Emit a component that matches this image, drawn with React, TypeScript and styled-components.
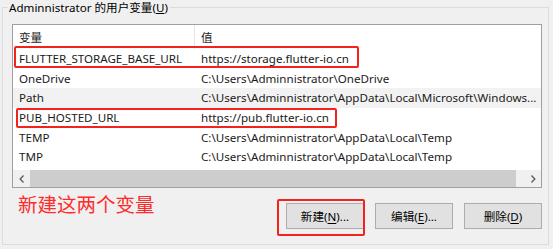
import React from 'react';
import styled, { createGlobalStyle } from 'styled-components';

const GlobalStyle = createGlobalStyle`
  html, body {
    margin: 0;
    padding: 0;
    background: #f0f0f0;
  }
  body {
    font-family: "Noto Sans", "Noto Sans CJK SC", sans-serif;
    font-size: 11.6px;
    color: #000;
  }
`;

const Page = styled.div`
  width: 553px;
  height: 249px;
  padding: 0 4px 0 2px;
  box-sizing: border-box;
  overflow: hidden;
`;

const GroupBox = styled.fieldset`
  margin: 0;
  padding: 0 6px 0 9px;
  height: 245px;
  box-sizing: border-box;
  border: 1px solid #dcdcdc;
  display: flex;
  flex-direction: column;
`;

const Legend = styled.legend`
  margin-left: -4px;
  padding: 0 2px 0 1px;
  line-height: 15px;
  color: #000;
`;

const ListBox = styled.div`
  margin-top: 9px;
  height: 164px;
  box-sizing: border-box;
  border: 1px solid #a0a0a0;
  background: #fff;
  display: flex;
  flex-direction: column;
  position: relative;
`;

const Header = styled.div`
  display: flex;
  height: 24px;
  align-items: center;
  color: #1e1e1e;
`;

const HeadCell = styled.div<{ $w?: number }>`
  width: ${p => (p.$w ? `${p.$w}px` : 'auto')};
  flex: ${p => (p.$w ? 'none' : 1)};
  height: 100%;
  box-sizing: border-box;
  padding-left: 6px;
  display: flex;
  align-items: center;
  border-right: ${p => (p.$w ? '1px solid #e5e5e5' : 'none')};
`;

const Row = styled.div<{ $hover?: boolean }>`
  display: flex;
  height: 19.6px;
  align-items: center;
  background: ${p => (p.$hover ? '#f2f2f2' : 'transparent')};
  position: relative;
  white-space: nowrap;
  color: #1a1a1a;
`;

const Cell = styled.div<{ $w?: number }>`
  width: ${p => (p.$w ? `${p.$w}px` : 'auto')};
  flex: ${p => (p.$w ? 'none' : 1)};
  padding-left: 6px;
  box-sizing: border-box;
  overflow: hidden;
`;

const Mark = styled.span<{ $x: number; $w: number; $y: number; $h: number }>`
  position: absolute;
  left: ${p => p.$x}px;
  top: ${p => p.$y}px;
  width: ${p => p.$w}px;
  height: ${p => p.$h}px;
  box-sizing: border-box;
  border: 2px solid #f2231f;
  border-radius: 2px;
  pointer-events: none;
`;

const Spacer = styled.div`
  flex: 1;
`;

const HScroll = styled.div`
  display: flex;
  height: 17px;
  background: #f0f0f0;
`;

const ScrollBtn = styled.div`
  width: 17px;
  display: flex;
  align-items: center;
  justify-content: center;
`;

const Thumb = styled.div`
  flex: 1;
  background: #cdcdcd;
  margin-right: 8px;
`;

const Footer = styled.div`
  flex: 1;
  display: flex;
  align-items: flex-start;
  justify-content: space-between;
  padding-top: 4px;
`;

const Note = styled.div`
  font-family: "Noto Sans CJK SC", sans-serif;
  font-size: 19.5px;
  line-height: 24px;
  color: #ff2a2a;
  margin-left: 6px;
`;

const Buttons = styled.div`
  display: flex;
  gap: 11px;
  margin-top: 11px;
  position: relative;
`;

const Button = styled.button`
  width: 78px;
  height: 26px;
  margin: 0;
  padding: 0;
  border: 1px solid #adadad;
  background: #e1e1e1;
  font-family: "Noto Sans", "Noto Sans CJK SC", sans-serif;
  font-size: 11.6px;
  color: #000;
  u {
    text-decoration: underline;
    text-underline-offset: 2px;
  }
`;

const Chevron = ({ dir }: { dir: 'left' | 'right' }) => (
  <svg width="6" height="8" viewBox="0 0 6 8">
    <path
      d={dir === 'left' ? 'M4.5 0.5 L1.2 4 L4.5 7.5' : 'M1.5 0.5 L4.8 4 L1.5 7.5'}
      fill="none"
      stroke="#606060"
      strokeWidth="1.4"
    />
  </svg>
);

const rows = [
  { name: 'FLUTTER_STORAGE_BASE_URL', value: 'https://storage.flutter-io.cn', mark: { x: 1, w: 345, y: -3, h: 22 } },
  { name: 'OneDrive', value: 'C:\\Users\\Adminnistrator\\OneDrive' },
  { name: 'Path', value: 'C:\\Users\\Adminnistrator\\AppData\\Local\\Microsoft\\Windows...', hover: true },
  { name: 'PUB_HOSTED_URL', value: 'https://pub.flutter-io.cn', mark: { x: 3, w: 321, y: 0, h: 20 } },
  { name: 'TEMP', value: 'C:\\Users\\Adminnistrator\\AppData\\Local\\Temp' },
  { name: 'TMP', value: 'C:\\Users\\Adminnistrator\\AppData\\Local\\Temp' },
];

const NAME_COL = 182;

export default function App() {
  return (
    <Page>
      <GlobalStyle />
      <GroupBox>
        <Legend>
          Adminnistrator 的用户变量(<u>U</u>)
        </Legend>
        <ListBox>
          <Header>
            <HeadCell $w={NAME_COL}>变量</HeadCell>
            <HeadCell>值</HeadCell>
          </Header>
          {rows.map(r => (
            <Row key={r.name} $hover={r.hover}>
              <Cell $w={NAME_COL}>{r.name}</Cell>
              <Cell>{r.value}</Cell>
              {r.mark && <Mark $x={r.mark.x} $w={r.mark.w} $y={r.mark.y} $h={r.mark.h} />}
            </Row>
          ))}
          <Spacer />
          <HScroll>
            <ScrollBtn>
              <Chevron dir="left" />
            </ScrollBtn>
            <Thumb />
            <ScrollBtn>
              <Chevron dir="right" />
            </ScrollBtn>
          </HScroll>
        </ListBox>
        <Footer>
          <Note>新建这两个变量</Note>
          <Buttons>
            <Mark $x={-9} $w={88} $y={-4} $h={37} />
            <Button>
              新建(<u>N</u>)...
            </Button>
            <Button>
              编辑(<u>E</u>)...
            </Button>
            <Button>
              删除(<u>D</u>)
            </Button>
          </Buttons>
        </Footer>
      </GroupBox>
    </Page>
  );
}
